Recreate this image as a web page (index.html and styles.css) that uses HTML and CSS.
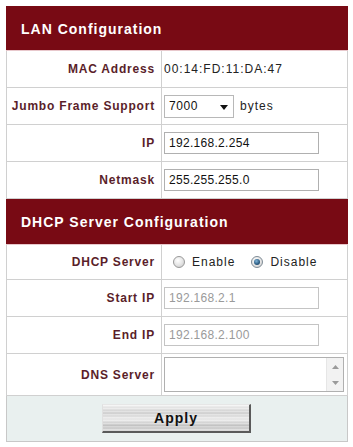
FILE: index.html
```html
<!DOCTYPE html>
<html>
<head>
<meta charset="utf-8">
<link rel="stylesheet" href="styles.css">
</head>
<body>
<table class="cfg">
  <colgroup><col class="col-label"><col class="col-value"></colgroup>
  <tr><th class="head head-lan" colspan="2">LAN Configuration</th></tr>
  <tr class="row">
    <td class="label">MAC Address</td>
    <td class="value">00:14:FD:11:DA:47</td>
  </tr>
  <tr class="row">
    <td class="label">Jumbo Frame Support</td>
    <td class="value">
      <div class="inline">
        <div class="select-wrap">
          <select class="select"><option>7000</option></select>
          <svg class="select-arrow" width="8" height="5" viewBox="0 0 8 5"><path d="M0 0H8L4 5Z" fill="#111"/></svg>
        </div>
        <span class="unit">bytes</span>
      </div>
    </td>
  </tr>
  <tr class="row">
    <td class="label">IP</td>
    <td class="value"><input class="text" type="text" value="192.168.2.254"></td>
  </tr>
  <tr class="row">
    <td class="label">Netmask</td>
    <td class="value"><input class="text" type="text" value="255.255.255.0"></td>
  </tr>
  <tr><th class="head head-dhcp" colspan="2">DHCP Server Configuration</th></tr>
  <tr class="row row-dhcp">
    <td class="label">DHCP Server</td>
    <td class="value">
      <div class="radios">
        <label class="radio-item"><span class="radio"></span>Enable</label>
        <label class="radio-item"><span class="radio radio-on"><span class="dot"></span></span>Disable</label>
      </div>
    </td>
  </tr>
  <tr class="row row-ip">
    <td class="label">Start IP</td>
    <td class="value"><input class="text text-disabled" type="text" value="192.168.2.1" disabled></td>
  </tr>
  <tr class="row row-ip">
    <td class="label">End IP</td>
    <td class="value"><input class="text text-disabled" type="text" value="192.168.2.100" disabled></td>
  </tr>
  <tr class="row row-dns">
    <td class="label">DNS Server</td>
    <td class="value">
      <div class="area">
        <textarea class="area-text"></textarea>
        <div class="scroll">
          <svg width="7" height="4" viewBox="0 0 7 4"><path d="M0 4L3.5 0L7 4Z" fill="#9a9a9a"/></svg>
          <svg width="7" height="4" viewBox="0 0 7 4"><path d="M0 0H7L3.5 4Z" fill="#9a9a9a"/></svg>
        </div>
      </div>
    </td>
  </tr>
  <tr class="row-foot">
    <td class="foot" colspan="2"><button class="apply" type="button">Apply</button></td>
  </tr>
</table>
</body>
</html>
```
FILE: styles.css
```css
html, body {
  margin: 0;
  padding: 0;
  background: #ffffff;
}
body {
  padding: 6px 0 0 6px;
  font-family: "Liberation Sans", Arial, sans-serif;
}
.cfg {
  width: 341px;
  border-collapse: collapse;
  table-layout: fixed;
}
.col-label { width: 155px; }
.col-value { width: 186px; }
.head {
  background: #780a14;
  color: #ffffff;
  text-align: left;
  font-size: 14px;
  font-weight: bold;
  letter-spacing: 1px;
  padding: 0 0 0 14px;
  border: 1px solid #780a14;
  border-bottom: 1px solid #e8c8cc;
}
.head-lan { height: 43px; }
.head-dhcp { height: 45px; }
.cfg td {
  border: 1px solid #d0d0d0;
  padding: 0;
}
.row td { height: 36px; }
.row-dhcp td { height: 34px; }
.row-ip td { height: 36px; }
.row-dns td { height: 41px; }
.label {
  text-align: right;
  padding-right: 6px !important;
  color: #5a1e2a;
  font-weight: bold;
  font-size: 12px;
  letter-spacing: 0.8px;
}
.value {
  padding-left: 2px !important;
  font-size: 12px;
  letter-spacing: 1px;
  color: #222222;
}
.inline {
  display: flex;
  align-items: center;
  gap: 6px;
}
.select-wrap {
  position: relative;
  width: 70px;
  height: 23px;
}
.select {
  appearance: none;
  -webkit-appearance: none;
  width: 70px;
  height: 23px;
  margin: 0;
  border: 1px solid #b8b8b8;
  border-radius: 0;
  background: #ffffff;
  font-family: "Liberation Sans", Arial, sans-serif;
  font-size: 12px;
  letter-spacing: 0.6px;
  color: #111111;
  padding: 0 0 0 4px;
}
.select-arrow {
  position: absolute;
  right: 6px;
  top: 10px;
}
.unit {
  color: #222222;
  letter-spacing: 1px;
}
.text {
  display: block;
  box-sizing: border-box;
  width: 155px;
  height: 22px;
  margin: 0;
  border: 1px solid #b0b0b0;
  padding: 0 0 0 4px;
  font-family: "Liberation Sans", Arial, sans-serif;
  font-size: 12px;
  letter-spacing: 0.3px;
  color: #111111;
  background: #ffffff;
}
.text-disabled {
  border-color: #c4c4c4;
  color: #9a9a9a;
  -webkit-text-fill-color: #9a9a9a;
}
.radios {
  display: flex;
  align-items: center;
  gap: 16px;
  padding-left: 9px;
}
.radio-item {
  display: flex;
  align-items: center;
  gap: 7px;
  font-size: 12px;
  letter-spacing: 1px;
  color: #222222;
}
.radio {
  box-sizing: border-box;
  width: 12px;
  height: 12px;
  border-radius: 50%;
  border: 1px solid #9a9a9a;
  background: radial-gradient(circle at 40% 35%, #ffffff 0%, #e6e6e6 50%, #c4c4c4 100%);
  display: flex;
  align-items: center;
  justify-content: center;
}
.radio-on {
  border-color: #7f8c96;
}
.dot {
  width: 6px;
  height: 6px;
  border-radius: 50%;
  background: radial-gradient(circle at 40% 35%, #7fb4d8 0%, #2a5a80 60%, #163a58 100%);
}
.area {
  display: flex;
  box-sizing: border-box;
  width: 180px;
  height: 35px;
  border: 1px solid #b0b0b0;
  background: #ffffff;
}
.area-text {
  flex: 1;
  min-width: 0;
  border: 0;
  margin: 0;
  padding: 0;
  resize: none;
  outline: none;
  background: #ffffff;
}
.scroll {
  width: 16px;
  background: #f2f2f2;
  border-left: 1px solid #e6e6e6;
  display: flex;
  flex-direction: column;
  align-items: center;
  justify-content: space-between;
  padding: 7px 0 6px;
}
.foot {
  height: 45px;
  background: #e9f0ef;
  text-align: left;
  padding-left: 95px !important;
  border-color: #c8c8c8 !important;
}
.apply {
  box-sizing: border-box;
  width: 149px;
  height: 29px;
  margin: 0;
  padding: 0;
  border: 1px solid;
  border-color: #e6e6e6 #5a5a5a #5a5a5a #e0e0e0;
  border-width: 1px 2px 2px 1px;
  background:
    repeating-linear-gradient(180deg, rgba(255,255,255,0.25) 0px, rgba(255,255,255,0.25) 1px, rgba(0,0,0,0.05) 2px, rgba(0,0,0,0) 3px),
    linear-gradient(180deg, #f4f4f4 0%, #d4d4d4 30%, #eeeeee 55%, #c6c6c6 80%, #dcdcdc 100%);
  font-family: "Liberation Sans", Arial, sans-serif;
  font-size: 14px;
  font-weight: bold;
  letter-spacing: 1px;
  color: #111111;
}
```
